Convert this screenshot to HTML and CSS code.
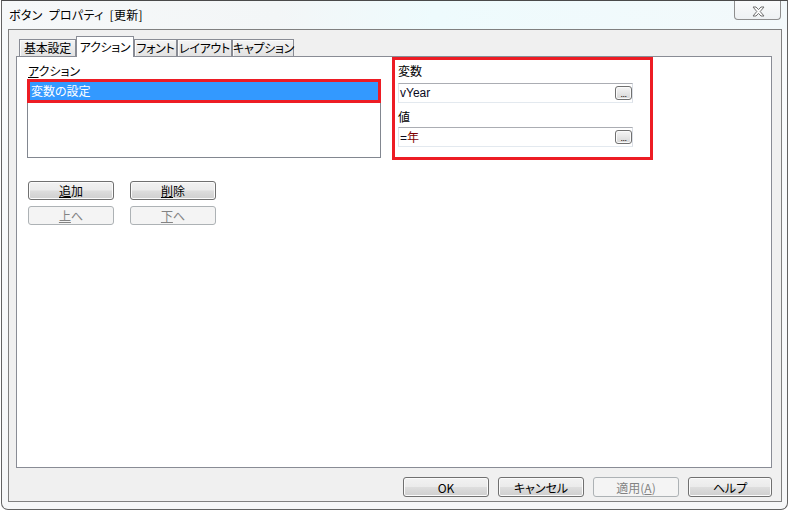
FILE: index.html
```html
<!DOCTYPE html>
<html lang="ja">
<head>
<meta charset="utf-8">
<title>ボタン プロパティ [更新]</title>
<link rel="stylesheet" href="styles.css">
</head>
<body>
<div class="window">
  <div class="titlebar">
    <span class="title">ボタン プロパティ [更新]</span>
    <div class="close">
      <svg width="13" height="11" viewBox="-1 -1 13 11"><polygon points="0,0 3,0 5.5,2.6 8,0 11,0 7.2,4.5 11,9 8,9 5.5,6.4 3,9 0,9 3.8,4.5" fill="#fdfdfd" stroke="#6f6f6f" stroke-width="1" stroke-linejoin="round"/></svg>
    </div>
  </div>
  <div class="client">
    <div class="tabs">
      <div class="tab t1">基本設定</div>
      <div class="tab active t2">アクション</div>
      <div class="tab t3">フォント</div>
      <div class="tab t4">レイアウト</div>
      <div class="tab t5">キャプション</div>
    </div>
    <div class="panel">
      <div class="left">
        <div class="label"><u>ア</u>クション</div>
        <div class="listbox">
          <div class="item">変数の設定</div>
        </div>
        <div class="btnrow">
          <button class="btn small"><u>追</u>加</button>
          <button class="btn small"><u>削</u>除</button>
        </div>
        <div class="btnrow second">
          <button class="btn small" disabled><u>上</u>へ</button>
          <button class="btn small" disabled><u>下</u>へ</button>
        </div>
      </div>
      <div class="right">
        <div class="rlabel first">変数</div>
        <div class="field"><span class="value latin">vYear</span><span class="dots">...</span></div>
        <div class="rlabel second">値</div>
        <div class="field"><span class="value"><span class="latin">=</span><span class="fn">年</span></span><span class="dots">...</span></div>
      </div>
    </div>
    <div class="footer">
      <button class="btn wide">OK</button>
      <button class="btn wide">キャンセル</button>
      <button class="btn wide" disabled>適用(<u>A</u>)</button>
      <button class="btn wide help">ヘルプ</button>
    </div>
  </div>
</div>
</body>
</html>
```
FILE: styles.css
```css
html, body {
  margin: 0;
  padding: 0;
  background: #ffffff;
}
body {
  font-family: "Noto Sans CJK JP", "Noto Sans", sans-serif;
  font-size: 12px;
  line-height: 15px;
  color: #000;
  font-feature-settings: "palt" 1;
}
u {
  text-decoration: underline;
  text-underline-offset: 1px;
}
.window {
  box-sizing: border-box;
  width: 787px;
  height: 510px;
  margin-left: 1px;
  border: 1px solid #636363;
  border-top-color: #4a4a4a;
  border-radius: 0 0 7px 7px;
  background: linear-gradient(#f5f8fa, #f9fbfc 60px, #f6f7f8);
  display: flex;
  flex-direction: column;
}
.titlebar {
  height: 28px;
  display: flex;
  align-items: flex-start;
  padding: 0 6px 0 7px;
  background: linear-gradient(90deg, #f6f8f9 0%, #f3f6f7 35%, #eefbfd 55%, #f3f9fb 100%);
}
.title {
  margin-top: 6px;
  letter-spacing: 0.3px;
  word-spacing: 3px;
}
.close {
  margin-left: auto;
  box-sizing: border-box;
  width: 47px;
  height: 19px;
  border: 1px solid #8e8e8e;
  border-top: none;
  border-radius: 0 0 4px 4px;
  background: linear-gradient(#f9fafb, #eef1f3);
  display: flex;
  justify-content: center;
  padding-top: 5px;
  padding-left: 2px;
}
.client {
  flex: 1;
  margin: 0 5px 7px 6px;
  border: 1px solid #808080;
  background: #f0f0f0;
  display: flex;
  flex-direction: column;
}
.tabs {
  display: flex;
  align-items: flex-end;
  height: 20px;
  margin: 6px 0 0 10px;
}
.tab {
  box-sizing: border-box;
  height: 17px;
  border: 1px solid #898c95;
  border-bottom: none;
  background: linear-gradient(#f4f4f4, #e2e2e2);
  box-shadow: inset 1px 1px 0 #fbfbfb;
  text-align: center;
  line-height: 15px;
  white-space: nowrap;
  letter-spacing: -0.3px;
}
.tab.active {
  height: 21px;
  margin-bottom: -1px;
  background: #ffffff;
  box-shadow: none;
  position: relative;
  z-index: 1;
  padding-top: 2px;
}
.t1 { width: 57px; }
.t2 { width: 58px; }
.t3 { width: 43px; }
.t4 { width: 55px; }
.t5 { width: 62px; }
.panel {
  box-sizing: border-box;
  margin-left: 7px;
  width: 756px;
  height: 412px;
  border: 1px solid #898c95;
  background: #ffffff;
  display: flex;
  align-items: flex-start;
  gap: 11px;
  padding-left: 10px;
}
.left {
  width: 354px;
  padding-top: 6px;
}
.left .label {
  padding-left: 1px;
}
.listbox {
  box-sizing: border-box;
  margin-top: 2px;
  height: 78px;
  border: 1px solid #828790;
  padding: 1px 2px;
}
.item {
  height: 18px;
  line-height: 18px;
  background: #3399ff;
  color: #ffffff;
  padding-left: 1px;
  position: relative;
}
.item::after {
  content: "";
  position: absolute;
  left: -3px;
  right: -3px;
  top: -3px;
  bottom: -3px;
  border: 3px solid #ed1c24;
}
.btnrow {
  display: flex;
  gap: 16px;
  margin-top: 23px;
  padding-left: 1px;
}
.btnrow.second {
  margin-top: 6px;
}
.btn {
  box-sizing: border-box;
  border: 1px solid #707070;
  border-radius: 3px;
  background: linear-gradient(#f2f2f2 0%, #ebebeb 48%, #dddddd 52%, #cfcfcf 100%);
  box-shadow: inset 0 0 0 1px #fbfbfb;
  font: inherit;
  color: #000;
  padding: 0;
  margin: 0;
  text-align: center;
  line-height: 15px;
}
.btn:disabled {
  border-color: #adb2b5;
  background: #f4f4f4;
  box-shadow: none;
  color: #838383;
}
.btn.small {
  width: 86px;
  height: 19px;
}
.btn.wide {
  width: 86px;
  height: 20px;
}
.btn.help {
  width: 84px;
}
.right {
  box-sizing: border-box;
  width: 261px;
  height: 103px;
  border: 3px solid #ed1c24;
  padding-left: 3px;
}
.rlabel.first {
  margin-top: 3px;
}
.rlabel.second {
  margin-top: 6px;
}
.field {
  box-sizing: border-box;
  width: 235px;
  height: 20px;
  border: 1px solid;
  border-color: #abadb3 #dbdfe6 #e3e9ef #e2e3ea;
  background: #ffffff;
  display: flex;
  align-items: center;
  justify-content: space-between;
  padding-left: 1px;
}
.rlabel.first + .field {
  margin-top: 5px;
}
.rlabel.second + .field {
  margin-top: 3px;
}
.latin {
  font-family: "Liberation Sans", Arial, sans-serif;
  font-size: 12px;
  color: #0a0a1e;
}
.fn {
  color: #800000;
}
.dots {
  box-sizing: border-box;
  width: 17px;
  height: 14px;
  border: 1px solid #707070;
  border-radius: 3px;
  background: linear-gradient(#f5f5f5, #e6e6e6 50%, #d6d6d6);
  box-shadow: inset 0 0 0 1px #fafafa;
  font-family: "Liberation Sans", Arial, sans-serif;
  font-size: 9px;
  line-height: 9px;
  display: flex;
  justify-content: center;
  align-items: flex-end;
  letter-spacing: -0.5px;
}
.footer {
  display: flex;
  justify-content: flex-end;
  gap: 9px;
  margin-top: 9px;
  padding-right: 9px;
}
```
